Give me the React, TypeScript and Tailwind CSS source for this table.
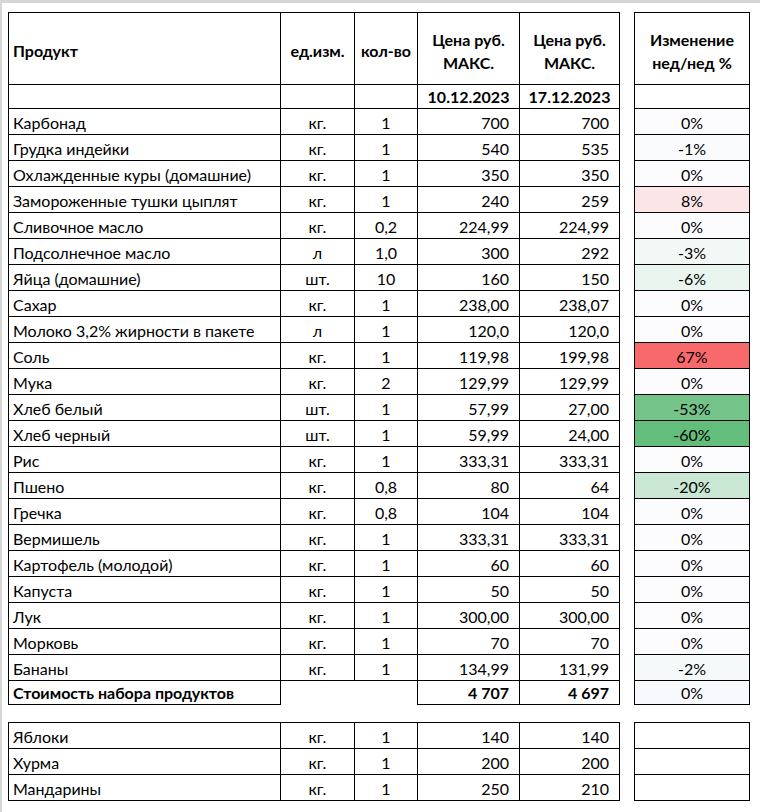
import React from "react";

type Row = { name: string; unit: string; qty: string; p1: string; p2: string; ch: string; bg: string };

const rows: Row[] = [
  { name: "Карбонад", unit: "кг.", qty: "1", p1: "700", p2: "700", ch: "0%", bg: "bg-[#FCFCFF]" },
  { name: "Грудка индейки", unit: "кг.", qty: "1", p1: "540", p2: "535", ch: "-1%", bg: "bg-[#F8FAFC]" },
  { name: "Охлажденные куры (домашние)", unit: "кг.", qty: "1", p1: "350", p2: "350", ch: "0%", bg: "bg-[#FCFCFF]" },
  { name: "Замороженные тушки цыплят", unit: "кг.", qty: "1", p1: "240", p2: "259", ch: "8%", bg: "bg-[#FBE5E7]" },
  { name: "Сливочное масло", unit: "кг.", qty: "0,2", p1: "224,99", p2: "224,99", ch: "0%", bg: "bg-[#FCFCFF]" },
  { name: "Подсолнечное масло", unit: "л", qty: "1,0", p1: "300", p2: "292", ch: "-3%", bg: "bg-[#F2F8F5]" },
  { name: "Яйца (домашние)", unit: "шт.", qty: "10", p1: "160", p2: "150", ch: "-6%", bg: "bg-[#E9F4EE]" },
  { name: "Сахар", unit: "кг.", qty: "1", p1: "238,00", p2: "238,07", ch: "0%", bg: "bg-[#FCFCFF]" },
  { name: "Молоко 3,2% жирности в пакете", unit: "л", qty: "1", p1: "120,0", p2: "120,0", ch: "0%", bg: "bg-[#FCFCFF]" },
  { name: "Соль", unit: "кг.", qty: "1", p1: "119,98", p2: "199,98", ch: "67%", bg: "bg-[#F8696B]" },
  { name: "Мука", unit: "кг.", qty: "2", p1: "129,99", p2: "129,99", ch: "0%", bg: "bg-[#FCFCFF]" },
  { name: "Хлеб белый", unit: "шт.", qty: "1", p1: "57,99", p2: "27,00", ch: "-53%", bg: "bg-[#74C48A]" },
  { name: "Хлеб черный", unit: "шт.", qty: "1", p1: "59,99", p2: "24,00", ch: "-60%", bg: "bg-[#63BE7B]" },
  { name: "Рис", unit: "кг.", qty: "1", p1: "333,31", p2: "333,31", ch: "0%", bg: "bg-[#FCFCFF]" },
  { name: "Пшено", unit: "кг.", qty: "0,8", p1: "80", p2: "64", ch: "-20%", bg: "bg-[#C9E7D3]" },
  { name: "Гречка", unit: "кг.", qty: "0,8", p1: "104", p2: "104", ch: "0%", bg: "bg-[#FCFCFF]" },
  { name: "Вермишель", unit: "кг.", qty: "1", p1: "333,31", p2: "333,31", ch: "0%", bg: "bg-[#FCFCFF]" },
  { name: "Картофель (молодой)", unit: "кг.", qty: "1", p1: "60", p2: "60", ch: "0%", bg: "bg-[#FCFCFF]" },
  { name: "Капуста", unit: "кг.", qty: "1", p1: "50", p2: "50", ch: "0%", bg: "bg-[#FCFCFF]" },
  { name: "Лук", unit: "кг.", qty: "1", p1: "300,00", p2: "300,00", ch: "0%", bg: "bg-[#FCFCFF]" },
  { name: "Морковь", unit: "кг.", qty: "1", p1: "70", p2: "70", ch: "0%", bg: "bg-[#FCFCFF]" },
  { name: "Бананы", unit: "кг.", qty: "1", p1: "134,99", p2: "131,99", ch: "-2%", bg: "bg-[#F5F9F9]" },
];

const fruits = [
  { name: "Яблоки", unit: "кг.", qty: "1", p1: "140", p2: "140" },
  { name: "Хурма", unit: "кг.", qty: "1", p1: "200", p2: "200" },
  { name: "Мандарины", unit: "кг.", qty: "1", p1: "250", p2: "210" },
];

const cell = "border border-black p-0 align-bottom leading-[19px] pb-[2px]";

export default function App() {
  return (
    <div
      className="w-[760px] h-[812px] bg-white border-t-[3px] border-l-[2px] border-[#d6d6d6] text-black text-[16px]"
      style={{ fontFamily: "Lato, 'Open Sans', sans-serif" }}
    >
      <div className="pt-[9px] pl-[6px]">
        <table className="border-collapse table-fixed w-[741px]">
          <colgroup>
            <col className="w-[272px]" />
            <col className="w-[74px]" />
            <col className="w-[63px]" />
            <col className="w-[102px]" />
            <col className="w-[100px]" />
            <col className="w-[15px]" />
            <col className="w-[115px]" />
          </colgroup>
          <tbody>
            <tr className="h-[72px]">
              <td className="border border-black align-middle font-bold pl-[4px] pt-[4px]">Продукт</td>
              <td className="border border-black align-middle font-bold text-center pt-[4px]">ед.изм.</td>
              <td className="border border-black align-middle font-bold text-center pt-[4px]">кол-во</td>
              <td className="border border-black align-middle font-bold text-center leading-[23px] pt-[4px]">
                Цена руб.<br />МАКС.
              </td>
              <td className="border border-black align-middle font-bold text-center leading-[23px] pt-[4px]">
                Цена руб.<br />МАКС.
              </td>
              <td className="p-0"></td>
              <td className="border border-black align-middle font-bold text-center leading-[23px] pt-[4px]">
                Изменение<br />нед/нед %
              </td>
            </tr>
            <tr className="h-[24px]">
              <td className={cell}></td>
              <td className={cell}></td>
              <td className={cell}></td>
              <td className={`${cell} font-bold text-center`}>10.12.2023</td>
              <td className={`${cell} font-bold text-center`}>17.12.2023</td>
              <td className="p-0"></td>
              <td className={cell}></td>
            </tr>
            {rows.map((r) => (
              <tr key={r.name} className="h-[26px]">
                <td className={`${cell} pl-[4px] whitespace-nowrap`}>{r.name}</td>
                <td className={`${cell} text-center`}>{r.unit}</td>
                <td className={`${cell} text-center`}>{r.qty}</td>
                <td className={`${cell} text-right pr-[10px]`}>{r.p1}</td>
                <td className={`${cell} text-right pr-[10px]`}>{r.p2}</td>
                <td className="p-0"></td>
                <td className={`${cell} text-center ${r.bg}`}>{r.ch}</td>
              </tr>
            ))}
            <tr className="h-[24px]">
              <td className={`${cell} pl-[4px] font-bold whitespace-nowrap`}>Стоимость набора продуктов</td>
              <td className="p-0"></td>
              <td className="p-0"></td>
              <td className={`${cell} text-right pr-[10px] font-bold`}>4 707</td>
              <td className={`${cell} text-right pr-[10px] font-bold`}>4 697</td>
              <td className="p-0"></td>
              <td className={`${cell} text-center bg-[#F8F9FC]`}>0%</td>
            </tr>
            <tr className="h-[18px]">
              <td className="p-0" colSpan={7}></td>
            </tr>
            {fruits.map((r) => (
              <tr key={r.name} className="h-[26px]">
                <td className={`${cell} pl-[4px] whitespace-nowrap`}>{r.name}</td>
                <td className={`${cell} text-center`}>{r.unit}</td>
                <td className={`${cell} text-center`}>{r.qty}</td>
                <td className={`${cell} text-right pr-[10px]`}>{r.p1}</td>
                <td className={`${cell} text-right pr-[10px]`}>{r.p2}</td>
                <td className="p-0"></td>
                <td className={cell}></td>
              </tr>
            ))}
          </tbody>
        </table>
      </div>
    </div>
  );
}
